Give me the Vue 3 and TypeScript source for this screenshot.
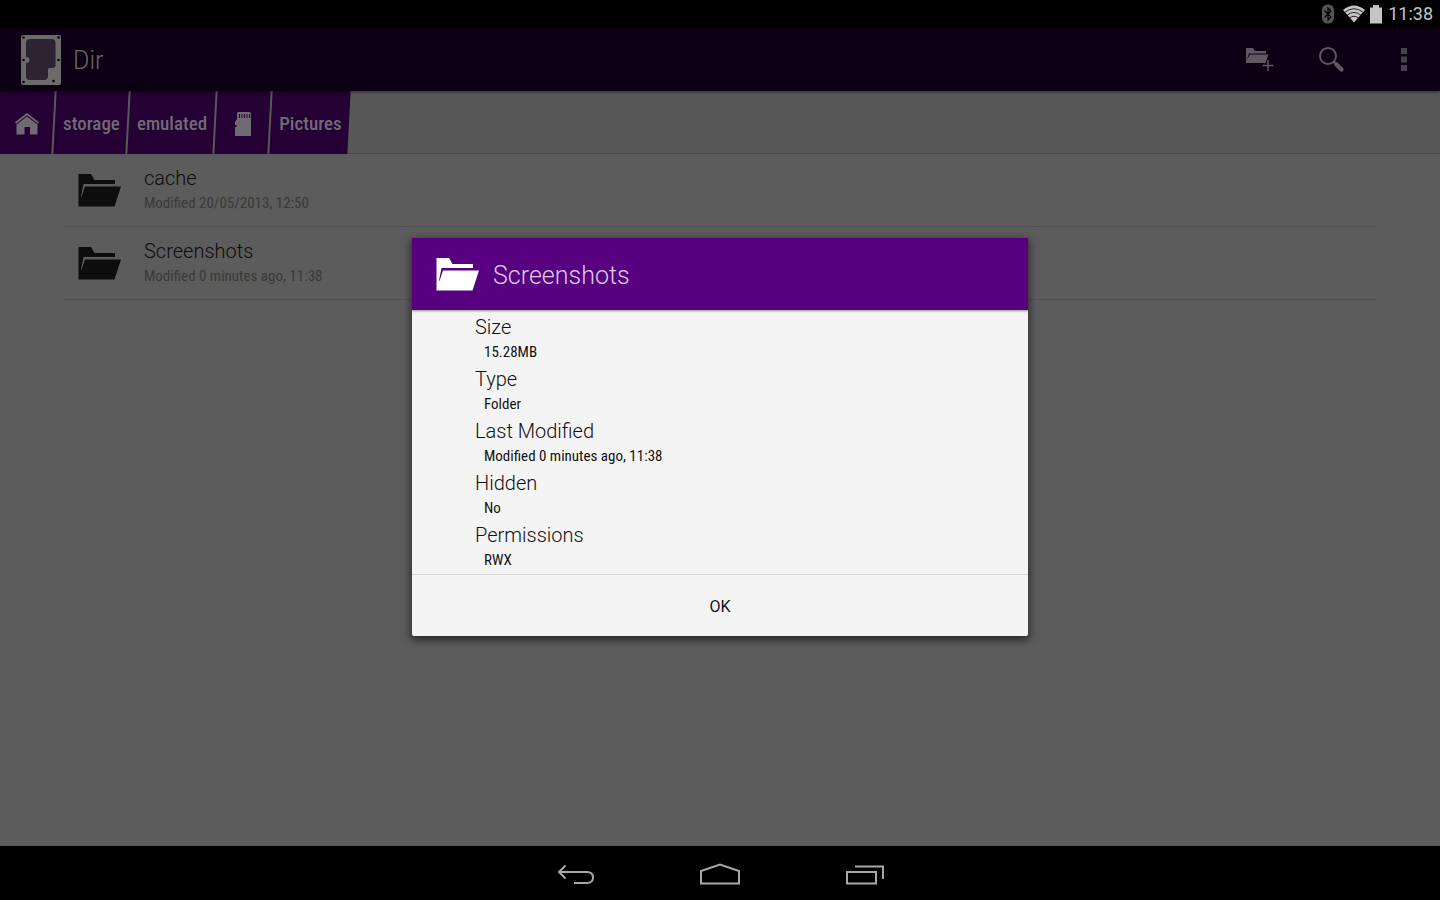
<script setup lang="ts">
interface Crumb { label: string; kind: 'home' | 'text' | 'card' }
interface Entry { name: string; modified: string }
interface Detail { label: string; value: string }

const crumbs: Crumb[] = [
  { label: 'Home', kind: 'home' },
  { label: 'storage', kind: 'text' },
  { label: 'emulated', kind: 'text' },
  { label: 'SD card', kind: 'card' },
  { label: 'Pictures', kind: 'text' },
]
const entries: Entry[] = [
  { name: 'cache', modified: 'Modified 20/05/2013, 12:50' },
  { name: 'Screenshots', modified: 'Modified 0 minutes ago, 11:38' },
]
const details: Detail[] = [
  { label: 'Size', value: '15.28MB' },
  { label: 'Type', value: 'Folder' },
  { label: 'Last Modified', value: 'Modified 0 minutes ago, 11:38' },
  { label: 'Hidden', value: 'No' },
  { label: 'Permissions', value: 'RWX' },
]
const folderShape = 'M0.500 0H13L16.500 6H37V10H5.500L3 22.500L3.500 23L7 12.500H43L36.500 32.500H0.500Z'
</script>

<template>
  <div class="screen">
    <div class="status">
      <svg width="12" height="20" viewBox="0 0 12 20" aria-hidden="true">
        <rect width="12" height="19" y="0.500" rx="5.500" fill="#555" />
        <path d="M2.500 6.500L9 13L6 16V4L9 7L2.500 13.500" fill="none" stroke="#000" stroke-width="1.200" />
      </svg>
      <svg class="wifi" width="22" height="18" viewBox="0 0 22 18" aria-hidden="true">
        <path d="M0 5Q11-4 22 5L11 17.500Z" fill="#c4c4c4" />
        <path d="M1.500 7.500Q11 0 20.500 7.500M4 10.300Q11 4.500 18 10.300M6.500 13Q11 9.500 15.500 13" fill="none" stroke="#000" stroke-width="0.800" />
      </svg>
      <svg width="12" height="19" viewBox="0 0 12 19" aria-hidden="true">
        <path d="M0 2.500H3V0H9V2.500H12V18.500H0Z" fill="#c4c4c4" />
      </svg>
      <time class="clock">11:38</time>
    </div>

    <header class="bar">
      <svg width="42" height="52" viewBox="0 0 42 52" aria-hidden="true">
        <rect x="1" y="1" width="40" height="50" rx="2" fill="#6b6b6b" />
        <path d="M10 5H32Q35.500 5 35.500 9V31Q35.500 34 32 34H29Q28 34 28 36V42Q28 46 24 46H10Q6 46 6 42V29Q9.500 29 9.500 26T6 23V9Q6 5 10 5Z" fill="#2d2333" />
        <g fill="#0b0010"><circle cx="3.500" cy="3.500" r="1.300" /><circle cx="38.500" cy="3.500" r="1.300" /><circle cx="3.500" cy="26" r="1.300" /><circle cx="38.500" cy="26" r="1.300" /><circle cx="3.500" cy="48" r="1.300" /><circle cx="33.500" cy="47" r="1.300" /></g>
      </svg>
      <h1 class="app-name">Dir</h1>
      <nav class="actions" aria-label="Actions">
        <button class="action" aria-label="New folder">
          <svg width="30" height="26" viewBox="0 0 30 26" aria-hidden="true">
            <path d="M1 1H8L10 4H21V6.500H4L2 13L5 7.500H23.500L20.500 16H1Z" fill="#5d5861" />
            <path d="M23 13V24M17.500 18.500H28.500" stroke="#5d5861" stroke-width="1.500" />
          </svg>
        </button>
        <button class="action" aria-label="Search">
          <svg width="30" height="30" viewBox="0 0 30 30" aria-hidden="true">
            <circle cx="11" cy="11" r="8" fill="none" stroke="#5d5861" stroke-width="2" />
            <path d="M16.500 16.500L19 19" stroke="#5d5861" stroke-width="2.500" />
            <path d="M19.500 19.500L24.500 24.500" stroke="#5d5861" stroke-width="4.500" stroke-linecap="round" />
          </svg>
        </button>
        <button class="action" aria-label="More options">
          <svg width="6" height="24" viewBox="0 0 6 24" aria-hidden="true">
            <path d="M0 0H6V6H0ZM0 8.500H6V14.500H0ZM0 17H6V23H0Z" fill="#45404a" />
          </svg>
        </button>
      </nav>
    </header>

    <nav class="crumbs" aria-label="Path">
      <button v-for="c in crumbs" :key="c.label" class="crumb" :class="c.kind" :aria-label="c.label">
        <svg v-if="c.kind === 'home'" width="24" height="22" viewBox="0 0 24 22" aria-hidden="true">
          <path d="M0.500 10L12 1L23.500 10" fill="none" stroke="#706b73" stroke-width="1.800" />
          <path d="M1.500 11.500L12 3.500L22.500 11.500V21.500H15V14H9.500V21.500H1.500Z" fill="#706b73" />
        </svg>
        <svg v-else-if="c.kind === 'card'" width="16" height="24" viewBox="0 0 16 24" aria-hidden="true">
          <path d="M3 0H14Q16 0 16 2V24H0V15H1.500V13H0V10L2 7V2Q2 0 3 0Z" fill="#706b73" />
          <path d="M4.500 2V6M7 2V6M9.500 2V6M12 2V6M14.500 2V6" stroke="#240035" stroke-width="1" />
        </svg>
        <span v-else class="crumb-text">{{ c.label }}</span>
      </button>
    </nav>

    <main class="content">
      <ul class="list">
        <li v-for="e in entries" :key="e.name" class="entry">
          <svg width="43" height="33" viewBox="0 0 43 33" aria-hidden="true"><path :d="folderShape" fill="#0d0d0d" /></svg>
          <div>
            <div class="entry-name">{{ e.name }}</div>
            <div class="entry-date">{{ e.modified }}</div>
          </div>
        </li>
      </ul>
      <div class="layer">
        <section class="dialog" role="dialog" aria-labelledby="dialog-title">
          <header class="dialog-head">
            <svg width="43" height="33" viewBox="0 0 43 33" aria-hidden="true"><path :d="folderShape" fill="#fff" /></svg>
            <h2 id="dialog-title" class="dialog-title">Screenshots</h2>
          </header>
          <dl class="details">
            <div v-for="d in details" :key="d.label" class="detail">
              <dt>{{ d.label }}</dt>
              <dd>{{ d.value }}</dd>
            </div>
          </dl>
          <button class="ok">OK</button>
        </section>
      </div>
    </main>

    <nav class="system" aria-label="System">
      <button class="key" aria-label="Back">
        <svg width="40" height="24" viewBox="0 0 40 24" aria-hidden="true">
          <path d="M10.500 2.500L4 9L10.500 15.500M4 9H32Q38 9 38 14.500T32 20H19" />
        </svg>
      </button>
      <button class="key" aria-label="Home">
        <svg width="40" height="24" viewBox="0 0 40 24" aria-hidden="true">
          <path d="M1 20.500V8L20 1.500L39 8V20.500Z" />
        </svg>
      </button>
      <button class="key" aria-label="Recent apps">
        <svg width="40" height="24" viewBox="0 0 40 24" aria-hidden="true">
          <path d="M2 9H31V20.500H2ZM10 3.500H38V16" />
        </svg>
      </button>
    </nav>
  </div>
</template>

<style>
body {
  margin: 0;
  background: #000;
}
</style>

<style scoped>
* {
  box-sizing: border-box;
}
.screen {
  position: relative;
  display: flex;
  flex-direction: column;
  min-height: 100vh;
  background: #5c5c5c;
  font-family: Roboto, "Noto Sans", sans-serif;
}
button {
  margin: 0;
  padding: 0;
  border: 0;
  background: none;
  font-family: inherit;
}
svg {
  display: block;
  flex: none;
}
.status {
  display: flex;
  align-items: center;
  justify-content: flex-end;
  height: 28px;
  padding-right: 7px;
  gap: 6px;
  background: #000;
}
.wifi {
  margin-left: 3px;
  margin-right: -1px;
}
.clock {
  color: #c4c4c4;
  font-size: 18px;
  line-height: 28px;
}
.bar {
  position: relative;
  display: flex;
  align-items: center;
  height: 63px;
  padding-left: 20px;
  gap: 11px;
  background: #0d0014;
  box-shadow: 0 1px 3px rgba(0, 0, 0, 0.5);
  z-index: 1;
}
.app-name {
  margin: 0;
  padding-top: 2px;
  color: #68646b;
  font-size: 25px;
  font-weight: 300;
  line-height: 32px;
}
.actions {
  display: flex;
  margin-left: auto;
}
.action {
  display: flex;
  align-items: center;
  justify-content: center;
  width: 72px;
  height: 63px;
}
.crumbs {
  display: flex;
  height: 63px;
  gap: 2px;
  overflow: hidden;
  background: #585858;
  box-shadow: inset 0 -1px #4a4a4a;
}
.crumb {
  position: relative;
  display: flex;
  align-items: center;
  justify-content: center;
  padding: 2px 7px 0;
}
.crumb::before {
  position: absolute;
  inset: 0;
  background: #240035;
  content: "";
  transform: skewX(-3deg);
}
.home {
  width: 53px;
}
.home::before {
  left: -8px;
}
.card {
  width: 53px;
}
.crumb > * {
  position: relative;
}
.crumb-text {
  padding: 1px 0 0 1px;
  color: #706b73;
  font-family: "Roboto Condensed", "Liberation Sans Narrow", Roboto, sans-serif;
  font-size: 19px;
  font-weight: 500;
  line-height: 24px;
}
.content {
  flex: 1;
}
.list {
  margin: 0;
  padding: 0 64px;
  list-style: none;
}
.entry {
  display: flex;
  align-items: center;
  height: 73px;
  padding-left: 14px;
  gap: 23px;
  border-bottom: 1px solid #515151;
}
.entry-name {
  color: #0c0c0c;
  font-size: 20px;
  font-weight: 300;
  line-height: 26px;
}
.entry-date,
dd {
  font-family: "Roboto Condensed", "Liberation Sans Narrow", Roboto, sans-serif;
  font-size: 15px;
  line-height: 24px;
}
.entry-date {
  color: #393939;
}
.layer {
  position: absolute;
  inset: 28px 0 54px;
  z-index: 2;
  display: flex;
  align-items: center;
  justify-content: center;
}
.dialog {
  width: 616px;
  max-width: 90%;
  overflow: hidden;
  border-radius: 0 0 2px 2px;
  background: #f4f4f4;
  box-shadow: 0 3px 8px 1px rgba(0, 0, 0, 0.6);
}
.dialog-head {
  display: flex;
  align-items: center;
  height: 72px;
  padding-left: 24px;
  gap: 14px;
  background: #570080;
  box-shadow: 0 1px 2px rgba(0, 0, 0, 0.4);
}
.dialog-title {
  margin: 0;
  padding-top: 3px;
  color: #dccbe5;
  font-size: 25px;
  font-weight: 300;
  line-height: 32px;
}
.details {
  margin: 0;
  padding: 4px 63px 0;
}
.detail {
  padding-bottom: 2px;
}
dt {
  color: #111;
  font-size: 20px;
  font-weight: 300;
  line-height: 26px;
}
dd {
  margin: 0;
  padding-left: 9px;
  color: #111;
}
.ok {
  display: block;
  width: 100%;
  height: 62px;
  padding-top: 2px;
  border-top: 1px solid #d6d6d6;
  color: #111;
  font-size: 16px;
}
.system {
  display: flex;
  align-items: center;
  justify-content: center;
  height: 54px;
  gap: 65px;
  background: #000;
}
.key {
  width: 80px;
  height: 54px;
  padding-top: 3px;
  display: flex;
  align-items: center;
  justify-content: center;
}
.key path {
  fill: none;
  stroke: #a8a8a8;
  stroke-width: 2;
}
</style>
